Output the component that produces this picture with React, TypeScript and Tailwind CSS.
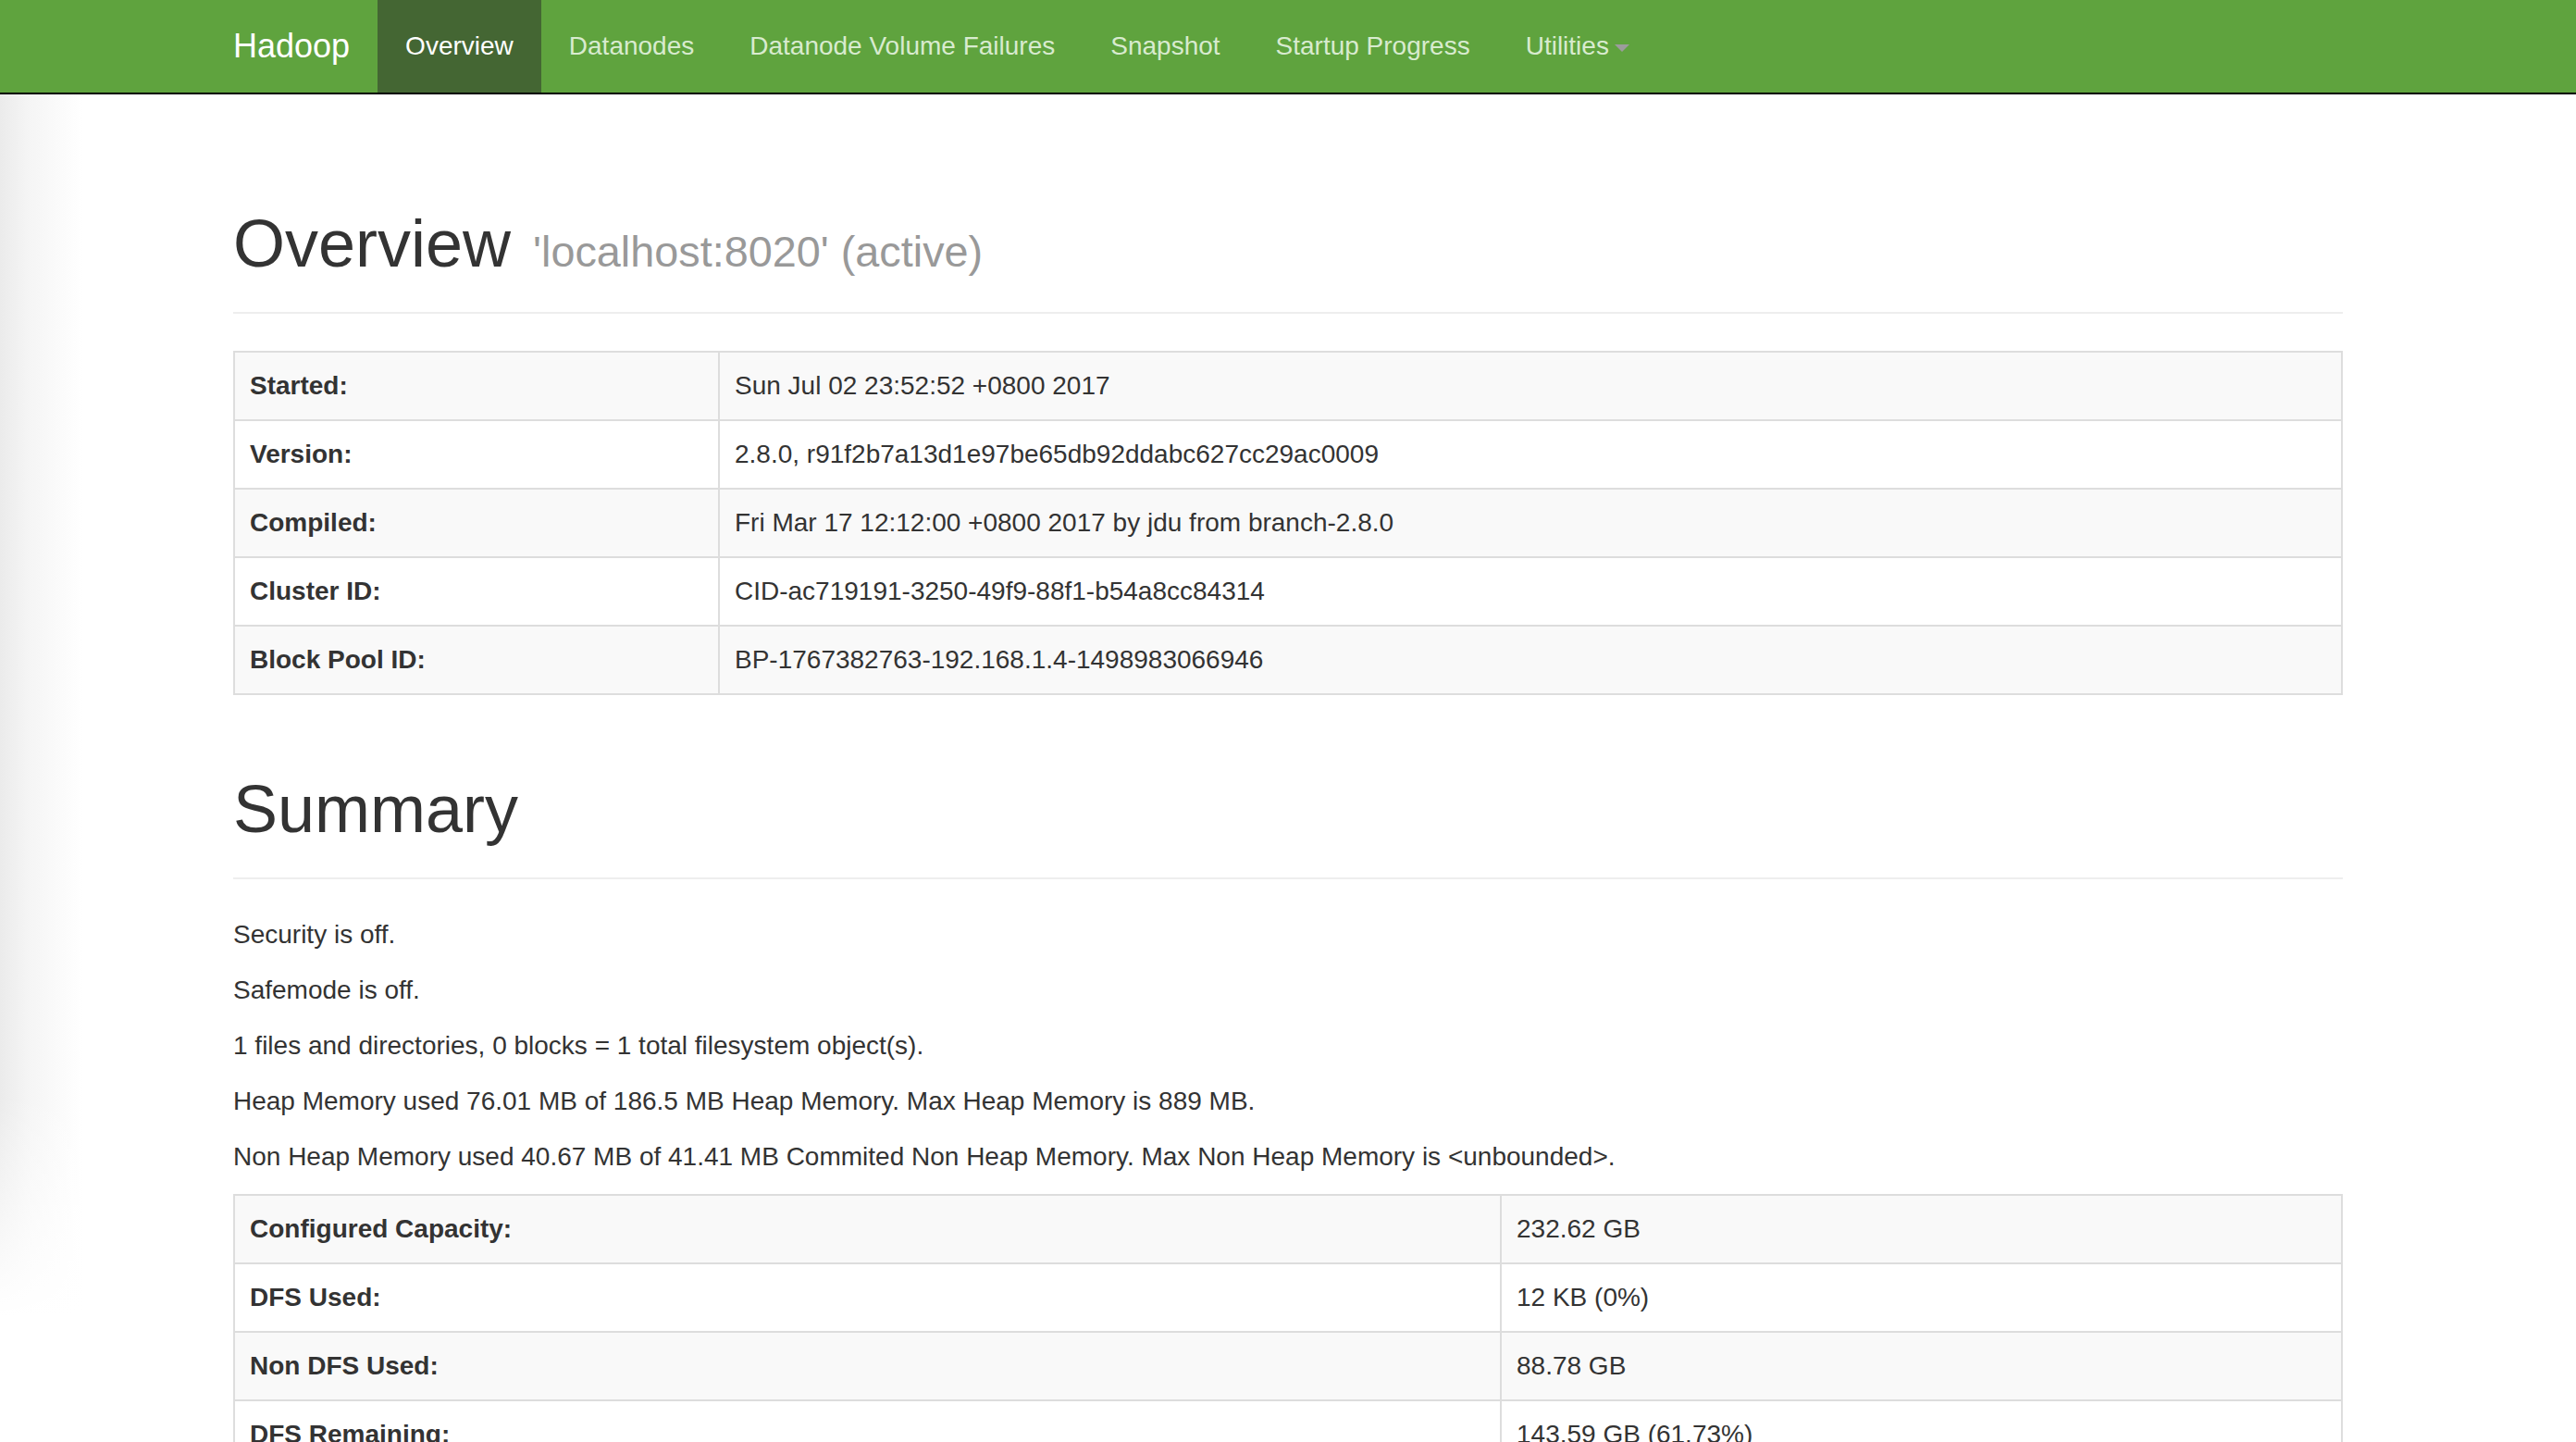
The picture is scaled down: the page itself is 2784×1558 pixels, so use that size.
import React from "react";

const overview: [string, string][] = [
  ["Started:", "Sun Jul 02 23:52:52 +0800 2017"],
  ["Version:", "2.8.0, r91f2b7a13d1e97be65db92ddabc627cc29ac0009"],
  ["Compiled:", "Fri Mar 17 12:12:00 +0800 2017 by jdu from branch-2.8.0"],
  ["Cluster ID:", "CID-ac719191-3250-49f9-88f1-b54a8cc84314"],
  ["Block Pool ID:", "BP-1767382763-192.168.1.4-1498983066946"],
];

const summary: [string, string][] = [
  ["Configured Capacity:", "232.62 GB"],
  ["DFS Used:", "12 KB (0%)"],
  ["Non DFS Used:", "88.78 GB"],
  ["DFS Remaining:", "143.59 GB (61.73%)"],
  ["Block Pool Used:", "12 KB (0%)"],
  ["DataNodes usages% (Min/Median/Max/stdDev):", "0.00% / 0.00% / 0.00% / 0.00%"],
  ["Live Nodes", "1 (Decommissioned: 0)"],
  ["Dead Nodes", "0 (Decommissioned: 0)"],
];

const navItems = ["Datanodes", "Datanode Volume Failures", "Snapshot", "Startup Progress"];

function InfoTable({ rows, labelWidth }: { rows: [string, string][]; labelWidth: string }) {
  return (
    <table className="w-full border-collapse border-2 border-[#ddd]">
      <tbody>
        {rows.map(([k, v]) => (
          <tr key={k} className="odd:bg-[#f9f9f9]">
            <th
              className={`${labelWidth} border-2 border-[#ddd] px-[16px] py-[16px] text-left align-top font-bold leading-[40px]`}
            >
              {k}
            </th>
            <td className="border-2 border-[#ddd] px-[16px] py-[16px] align-top leading-[40px]">{v}</td>
          </tr>
        ))}
      </tbody>
    </table>
  );
}

export default function App() {
  return (
    <div className="relative min-h-screen overflow-hidden bg-white font-['Liberation_Sans',Arial,sans-serif] text-[28px] leading-[40px] text-[#333]">
      {/* navbar */}
      <nav className="h-[102px] border-b-2 border-black bg-[#5fa33e]">
        <div className="mx-auto flex h-[100px] w-[2340px] px-[30px]">
          <a className="-ml-[30px] block px-[30px] py-[30px] text-[36px] leading-[40px] text-white">Hadoop</a>
          <ul className="flex">
            <li>
              <a className="block bg-[#446633] px-[30px] py-[30px] leading-[40px] text-white">Overview</a>
            </li>
            {navItems.map((n) => (
              <li key={n}>
                <a className="block px-[30px] py-[30px] leading-[40px] text-[#d8ebcf]">{n}</a>
              </li>
            ))}
            <li>
              <a className="flex items-center px-[30px] py-[30px] leading-[40px] text-[#d8ebcf]">
                Utilities
                <span className="ml-[6px] mt-[4px] inline-block h-0 w-0 border-x-[8px] border-t-[8px] border-x-transparent border-t-[#9c9c9c]" />
              </a>
            </li>
          </ul>
        </div>
      </nav>

      <div className="mx-auto w-[2340px] px-[30px]">
        <div className="mt-[122px] mb-[40px] border-b-2 border-[#eee] pb-[14px]">
          <h1 className="mb-[20px] text-[72px] font-medium leading-[79px] text-[#333]">
            Overview{" "}
            <small className="ml-[4px] text-[46.8px] font-normal leading-none text-[#999]">'localhost:8020' (active)</small>
          </h1>
        </div>

        <InfoTable rows={overview} labelWidth="w-[524px]" />

        <div className="mt-[84px] mb-[40px] border-b-2 border-[#eee] pb-[14px]">
          <h1 className="mb-[20px] text-[72px] font-medium leading-[79px] text-[#333]">Summary</h1>
        </div>

        <p className="mb-[20px]">Security is off.</p>
        <p className="mb-[20px]">Safemode is off.</p>
        <p className="mb-[20px]">1 files and directories, 0 blocks = 1 total filesystem object(s).</p>
        <p className="mb-[20px]">Heap Memory used 76.01 MB of 186.5 MB Heap Memory. Max Heap Memory is 889 MB.</p>
        <p className="mb-[20px]">
          Non Heap Memory used 40.67 MB of 41.41 MB Commited Non Heap Memory. Max Non Heap Memory is &lt;unbounded&gt;.
        </p>

        <InfoTable rows={summary} labelWidth="w-[1369px]" />
      </div>

      {/* window shadow on the left edge */}
      <div className="pointer-events-none absolute left-0 top-[102px] h-[1320px] w-[90px] bg-[linear-gradient(to_right,#ebebeb,#f5f5f5_35%,rgba(255,255,255,0))]">
        <div className="absolute bottom-0 left-0 h-[240px] w-full bg-[linear-gradient(to_bottom,rgba(255,255,255,0),#fff)]" />
      </div>
    </div>
  );
}
